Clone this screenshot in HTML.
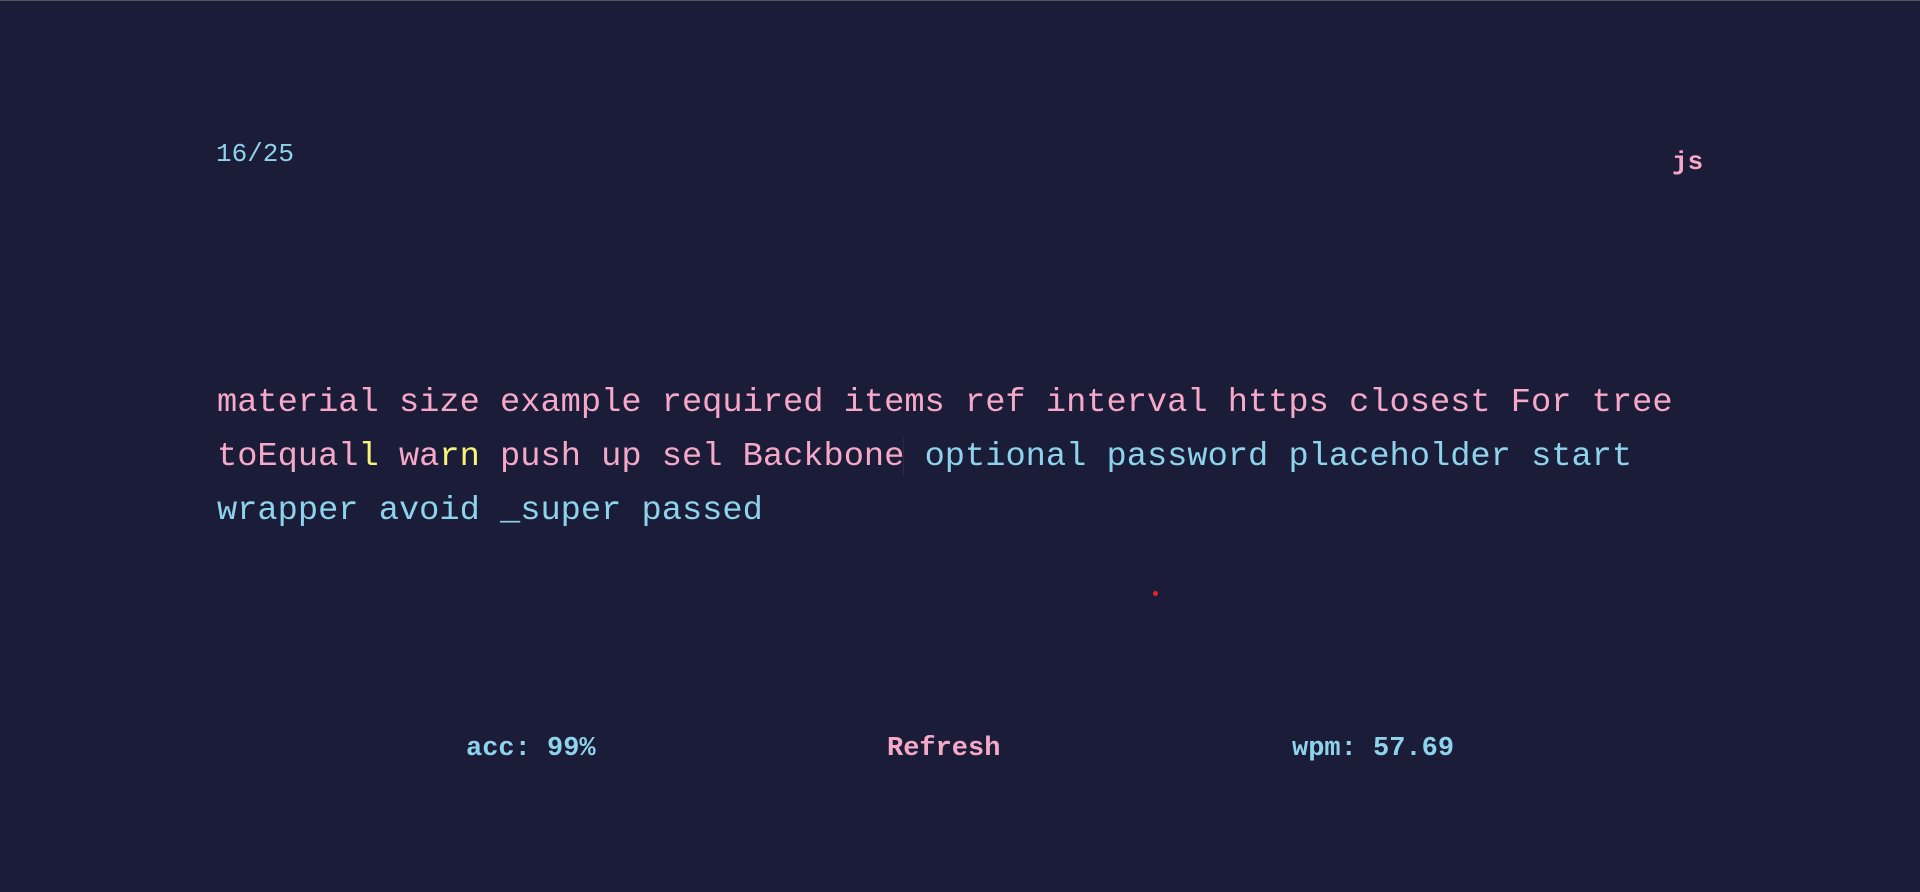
<!DOCTYPE html>
<html><head><style>
html,body{margin:0;padding:0}
body{width:1920px;height:891px;background:#1b1c37;position:relative;overflow:hidden;font-family:"Liberation Mono",monospace;border-top:1px solid #555}
.a{position:absolute;white-space:pre}
.p{color:#f5a8c8}.b{color:#8ed3ec}.y{color:#f6f57a}
#t{left:217px;top:375px;font-size:33.7px;line-height:54px}
</style></head><body>
<div class="a b" style="left:216px;top:138px;font-size:26px">16/25</div>
<div class="a p" style="left:1672px;top:146px;font-size:26px;font-weight:bold">js</div>
<div class="a" id="t"><span class="p">material size example required items ref interval https closest For tree</span>
<span class="p">toEqual</span><span class="y">l</span> <span class="p">wa</span><span class="y">rn</span><span class="p"> push up sel Backbone</span><span style="border-left:1px solid #2a2b45;margin-left:-1px"></span> <span class="b">optional password placeholder start</span>
<span class="b">wrapper avoid _super passed</span></div>
<div class="a" style="left:1153px;top:590px;width:5px;height:5px;border-radius:50%;background:#e8222e"></div>
<div class="a b" style="left:466px;top:733px;font-size:27px;font-weight:bold">acc: 99%</div>
<div class="a p" style="left:887px;top:733px;font-size:27px;font-weight:bold">Refresh</div>
<div class="a b" style="left:1292px;top:733px;font-size:27px;font-weight:bold">wpm: 57.69</div>
</body></html>
